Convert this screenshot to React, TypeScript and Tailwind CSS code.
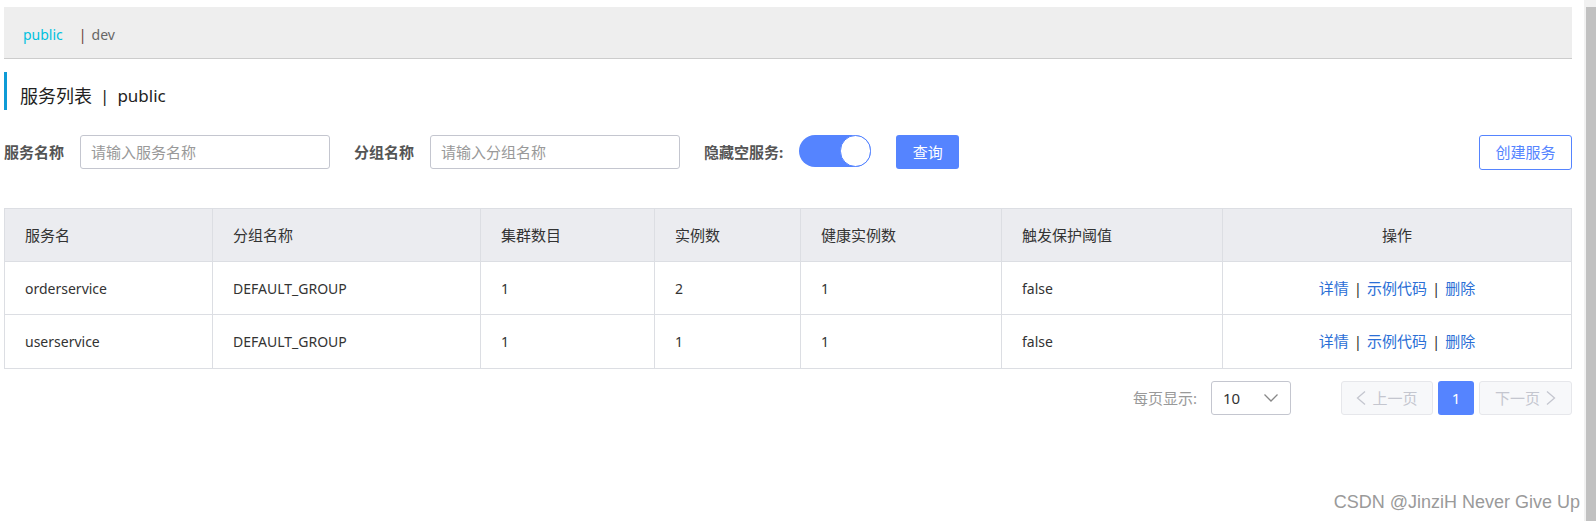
import React from 'react';

const rows = [
  { name: 'orderservice', group: 'DEFAULT_GROUP', clusters: 1, instances: 2, healthy: 1, threshold: 'false' },
  { name: 'userservice', group: 'DEFAULT_GROUP', clusters: 1, instances: 1, healthy: 1, threshold: 'false' },
];

const headers = ['服务名', '分组名称', '集群数目', '实例数', '健康实例数', '触发保护阈值'];

function Chevron({ dir }: { dir: 'left' | 'right' }) {
  return (
    <svg width="10" height="14" viewBox="0 0 10 14" fill="none" aria-hidden>
      <polyline
        points={dir === 'left' ? '9,0.5 1.5,7 9,13.5' : '1,0.5 8.5,7 1,13.5'}
        stroke="currentColor"
        strokeWidth="1.3"
      />
    </svg>
  );
}

export default function App() {
  return (
    <div className="relative flex h-[521px] bg-white text-[#333] font-['Noto_Sans','Noto_Sans_CJK_SC',sans-serif] overflow-hidden">
      <main className="flex-1 pl-[4px] pr-[12px] pt-[7px]">
        {/* namespace bar */}
        <div className="h-[52px] flex items-center pl-[19px] pt-[3px] bg-[#eeeeee] border-b border-[#cccccc] text-[14px]">
          <span className="text-[#00c1de] cursor-pointer">public</span>
          <span className="ml-[16px] mr-[5px] text-[#6b4034]">|</span>
          <span className="text-[#666]">dev</span>
        </div>

        {/* page title */}
        <div className="mt-[13px] h-[38px] border-l-[3px] border-[#0e9bd6] pl-[13px] pt-[13px] flex items-start">
          <span className="text-[18px] leading-[22px] text-[#222]">服务列表</span>
          <span className="text-[17px] leading-[22px] ml-[8px] mr-[8px] text-[#222]">|</span>
          <span className="text-[17px] leading-[22px] text-[#222]">public</span>
        </div>

        {/* filters */}
        <div className="mt-[25px] flex items-start">
          <label className="h-[34px] leading-[34px] text-[15px] font-bold text-[#555]">服务名称</label>
          <input
            className="ml-[16px] w-[250px] h-[34px] px-[10px] border border-[#c4c6cf] rounded-[3px] text-[15px] placeholder:text-[#999] outline-none"
            placeholder="请输入服务名称"
          />
          <label className="ml-[24px] h-[34px] leading-[34px] text-[15px] font-bold text-[#555]">分组名称</label>
          <input
            className="ml-[16px] w-[250px] h-[34px] px-[10px] border border-[#c4c6cf] rounded-[3px] text-[15px] placeholder:text-[#999] outline-none"
            placeholder="请输入分组名称"
          />
          <label className="ml-[24px] h-[34px] leading-[34px] text-[15px] font-bold text-[#555]">隐藏空服务:</label>
          <button
            type="button"
            className="ml-[16px] w-[72px] h-[32px] rounded-full bg-[#5584ff] flex items-center justify-end p-0"
          >
            <span className="w-[31px] h-[32px] rounded-full bg-white border border-[#5584ff]" />
          </button>
          <button
            type="button"
            className="ml-[25px] w-[63px] h-[34px] rounded-[3px] bg-[#5584ff] text-white text-[15px]"
          >
            查询
          </button>
          <button
            type="button"
            className="ml-auto w-[93px] h-[35px] rounded-[3px] border border-[#5584ff] text-[#5584ff] text-[15px] bg-white"
          >
            创建服务
          </button>
        </div>

        {/* table */}
        <div className="mt-[38px] border border-[#dcdee3]">
          <div className="grid grid-cols-[208px_268px_174px_146px_201px_221px_1fr] h-[53px] bg-[#ebecf0] border-b border-[#dcdee3] text-[15px]">
            {headers.map((h) => (
              <div key={h} className="flex items-center pl-[20px] border-r border-[#dcdee3]">
                {h}
              </div>
            ))}
            <div className="flex items-center justify-center">操作</div>
          </div>
          {rows.map((r, i) => (
            <div
              key={r.name}
              className={`grid grid-cols-[208px_268px_174px_146px_201px_221px_1fr] h-[53px] text-[14px] ${
                i < rows.length - 1 ? 'border-b border-[#dcdee3]' : ''
              }`}
            >
              {[r.name, r.group, r.clusters, r.instances, r.healthy, r.threshold].map((v, j) => (
                <div key={j} className="flex items-center pl-[20px] border-r border-[#dcdee3]">
                  {v}
                </div>
              ))}
              <div className="flex items-center justify-center text-[15px]">
                <a className="text-[#2b6fd6] cursor-pointer">详情</a>
                <span className="mx-[5px] text-[#333]">|</span>
                <a className="text-[#2b6fd6] cursor-pointer">示例代码</a>
                <span className="mx-[5px] text-[#333]">|</span>
                <a className="text-[#2b6fd6] cursor-pointer">删除</a>
              </div>
            </div>
          ))}
        </div>

        {/* pagination */}
        <div className="mt-[12px] flex items-center justify-end text-[15px]">
          <span className="text-[#999]">每页显示:</span>
          <div className="ml-[14px] w-[80px] h-[34px] flex items-center justify-between pl-[11px] pr-[12px] border border-[#c4c6cf] rounded-[3px] bg-white">
            <span className="text-[15px] text-[#333]">10</span>
            <svg width="14" height="8" viewBox="0 0 14 8" fill="none" aria-hidden>
              <polyline points="0.5,0.5 7,7 13.5,0.5" stroke="#888" strokeWidth="1.3" />
            </svg>
          </div>
          <button
            type="button"
            className="ml-[50px] w-[92px] h-[34px] flex items-center justify-center gap-[6px] rounded-[3px] border border-[#e6e7eb] bg-[#f7f8fa] text-[#c4c6cf] text-[15px]"
          >
            <Chevron dir="left" />
            上一页
          </button>
          <button
            type="button"
            className="ml-[5px] w-[36px] h-[34px] rounded-[3px] bg-[#5584ff] text-white text-[15px]"
          >
            1
          </button>
          <button
            type="button"
            className="ml-[5px] w-[93px] h-[34px] flex items-center justify-center gap-[6px] rounded-[3px] border border-[#e6e7eb] bg-[#f7f8fa] text-[#c4c6cf] text-[15px]"
          >
            下一页
            <Chevron dir="right" />
          </button>
        </div>
      </main>

      {/* browser scrollbar */}
      <aside className="w-[12px] flex flex-col bg-[#f1f1f1]">
        <div className="h-[7px]" />
        <div className="flex-1 ml-[2px] bg-[#c1c1c1]" />
      </aside>

      <div className="absolute right-[16px] top-[493px] text-[18px] leading-[18px] text-[#9a9a9a] font-['Liberation_Sans',Arial,sans-serif] pointer-events-none">
        CSDN @JinziH Never Give Up
      </div>
    </div>
  );
}
